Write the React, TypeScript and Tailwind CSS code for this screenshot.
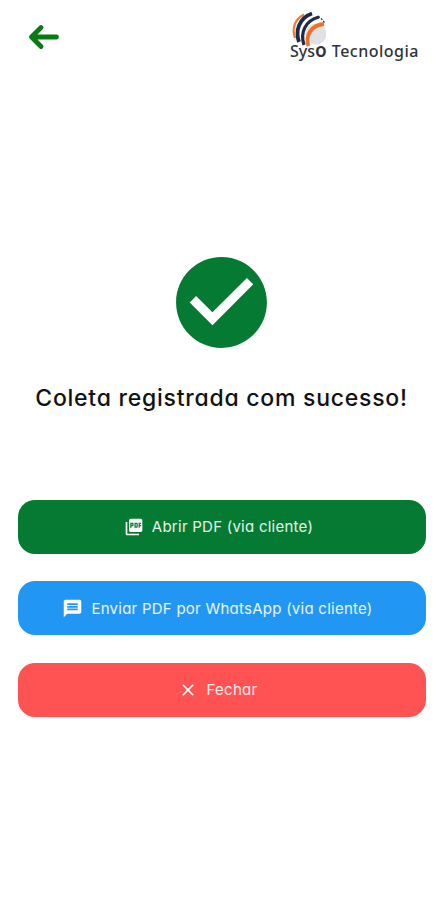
import type { ReactNode } from 'react';
import { MdCheckCircle, MdClose, MdMessage, MdPictureAsPdf } from 'react-icons/md';

const SysoLogo = () => (
  <div className="relative h-[53px] w-[131px] text-[#2f343c]">
    <svg viewBox="0 0 36 40" className="absolute left-0 top-0 h-[40px] w-[36px]" aria-hidden>
      <circle cx="26" cy="25" r="10.500" fill="#dfe1e5" />
      <g fill="none">
        <path d="M5 29C1.500 19 5 10 14 5.500" stroke="#ee7a3c" strokeWidth="2.200" />
        <path d="M9 33C5 22 9 9 22 4.500" stroke="#1f2a44" strokeWidth="3.800" />
        <path d="M14 36C10 24 15 11.500 29 8" stroke="#1f2a44" strokeWidth="3.200" />
        <path d="M28 7.500C31 9 33 11 34.500 14" stroke="#1f2a44" strokeWidth="1.400" strokeDasharray="2 1.500" />
        <path d="M18.500 37C15 27 21 16 34 15" stroke="#f26f21" strokeWidth="3.800" />
      </g>
    </svg>
    <div className="absolute left-0 top-[29px] flex items-baseline whitespace-nowrap font-['Noto_Sans',sans-serif] text-[16px] leading-[24px]">
      <span className="font-medium">Sys</span>
      <span className="text-[19px] font-semibold leading-[24px]">o</span>
      <span className="ml-[5px] font-medium tracking-[0.5px]">Tecnologia</span>
    </div>
  </div>
);

const BackArrow = () => (
  <svg
    viewBox="0 0 32 26"
    className="h-[26px] w-[32px]"
    fill="none"
    stroke="#087a12"
    strokeWidth="4.800"
    strokeLinecap="round"
    strokeLinejoin="round"
  >
    <path d="M28.500 13H3.500M13 3.500L3.500 13l9.500 9.500" />
  </svg>
);

type ActionButtonProps = {
  className: string;
  icon: ReactNode;
  label: string;
};

const ActionButton = ({ className, icon, label }: ActionButtonProps) => (
  <button
    type="button"
    className={`flex h-[54px] w-full items-center justify-center rounded-[17px] text-[15px] tracking-[0.25px] text-white/90 ${className}`}
  >
    {icon}
    <span className="whitespace-nowrap pt-[2px]">{label}</span>
  </button>
);

export default function App() {
  return (
    <div className="flex h-[900px] w-[443px] flex-col bg-white font-[Inter,sans-serif] [font-feature-settings:'cv11']">
      <header className="flex h-[64px] items-start justify-between pl-[28px] pr-[22px]">
        <button type="button" aria-label="Voltar" className="mt-[24px]">
          <BackArrow />
        </button>
        <div className="mt-[9px]">
          <SysoLogo />
        </div>
      </header>

      <main className="flex flex-col items-center px-[18px] pt-[183.5px]">
        <MdCheckCircle size={109} className="text-[#047a32]" />
        <h1 className="mt-[25.5px] whitespace-nowrap text-[23px] font-medium leading-[32px] tracking-[0.75px] text-[#111111]">
          Coleta registrada com sucesso!
        </h1>

        <div className="mt-[85.5px] flex w-[408px] flex-col gap-[27.5px]">
          <ActionButton
            className="bg-[#047a32] pr-[6px]"
            icon={<MdPictureAsPdf size={20} className="mr-[8px] text-white" />}
            label="Abrir PDF (via cliente)"
          />
          <ActionButton
            className="bg-[#2196f3] pr-[8px]"
            icon={<MdMessage size={21} className="mr-[8px] text-white" />}
            label="Enviar PDF por WhatsApp (via cliente)"
          />
          <ActionButton
            className="bg-[#ff5252] pr-[8px]"
            icon={<MdClose size={20} className="mr-[9px] text-white" />}
            label="Fechar"
          />
        </div>
      </main>
    </div>
  );
}
